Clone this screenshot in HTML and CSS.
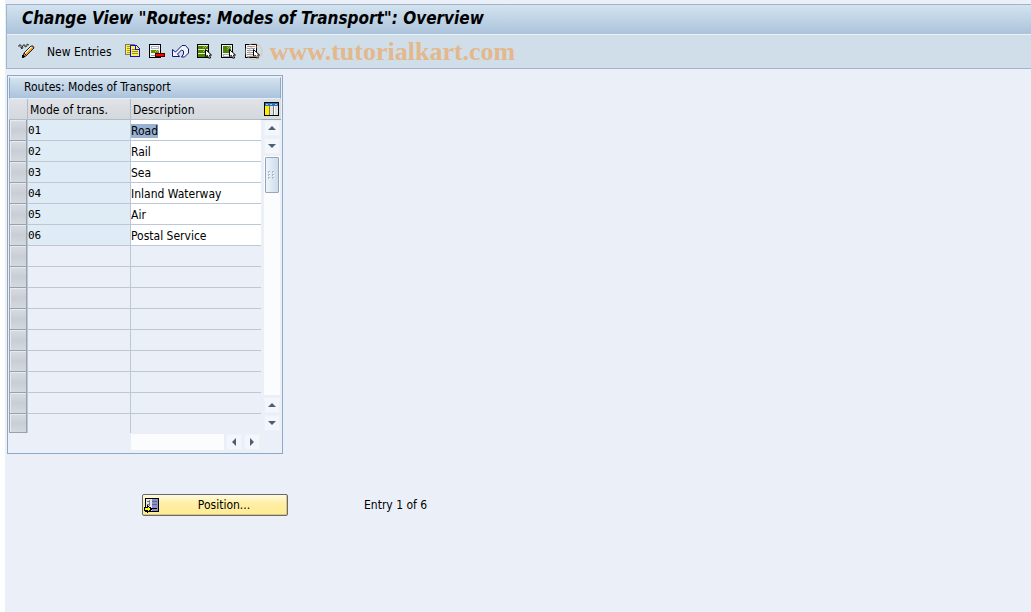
FILE: index.html
```html
<!DOCTYPE html>
<html lang="en">
<head>
<meta charset="utf-8">
<title>Change View "Routes: Modes of Transport": Overview</title>
<link rel="stylesheet" href="styles.css">
</head>
<body>
<header class="top">
  <h1 class="title">Change View "Routes: Modes of Transport": Overview</h1>
  <div class="toolbar">
    <button class="tool" aria-label="Display / Change"><svg width="17" height="16" viewBox="0 0 17 16"><path d="M1 4V2h2v3l2-2V2h2v2l2-1V1l2 1M3 5l1 1 1-2" fill="none" stroke="#333"/><path d="M5 14l1-4 7-7h2l1 2-8 8z" fill="#f39a1d"/><path d="M6 10l7-7 1 1-7 7z" fill="#fff"/><path d="M5 14l1-4 7-7h2l1 2-8 8zM6 10l3 3" fill="none" stroke="#222"/><path d="M4 12h2l1 2-2 1H4z" fill="#000"/></svg></button>
    <button class="tool new">New Entries</button>
    <button class="tool" aria-label="Copy As"><svg width="16" height="16" viewBox="0 0 16 16" shape-rendering="crispEdges"><path d="M.5 1.500h9v10h-9z" fill="#ffee4a" stroke="#777a60"/><path d="M2 3.500h5M2 5.500h5M2 7.500h5M2 9.500h5" stroke="#a69c3a"/><path d="M5.500 2.500h6l3 3v8h-9z" fill="#ffef4a" stroke="#1010d8"/><path d="M10.500 3v3.500h4" fill="none" stroke="#1010d8"/><path d="M7 6.500h3M7 8.500h6M7 10.500h6" stroke="#918b32"/></svg></button>
    <button class="tool" aria-label="Delete"><svg width="17" height="16" viewBox="0 0 17 16" shape-rendering="crispEdges"><path d="M1.500 1.500h11v13h-11z" fill="#f4f6fa" stroke="#000"/><path d="M3 3h8v3H3z" fill="#aab2ca"/><path d="M4 4h6v1H4z" fill="#fff"/><path d="M3 7h8v3H3z" fill="#648d00"/><path d="M8 7h1v1H8zm2 0h1v1h-1zM7 8h1v1H7zm2 0h1v1H9z" fill="#b2c96e"/><path d="M3 12h5v1H3z" fill="#8d9ab8"/><path d="M7.500 10.500h9v3h-9z" fill="#e00" stroke="#400"/><path d="M8 11h8v2H8z" fill="#f00"/></svg></button>
    <button class="tool" aria-label="Undo Change"><svg width="17" height="16" viewBox="0 0 17 16"><path d="M.5 6.500v7h7l-2-2.500 4-4 2 1v3l-2 3h3l4-4V6l-3-3.500H10L3.500 9z" fill="#edf2fb" stroke="#17177c"/></svg></button>
    <button class="tool" aria-label="Select All"><svg width="17" height="16" viewBox="0 0 17 16"><g shape-rendering="crispEdges"><path d="M1.500 1.500h11v13h-11z" fill="#e3eddd" stroke="#000"/><path d="M2 3h10v3H2zm0 4h10v3H2zm0 4h10v3H2z" fill="#4e8200"/><path d="M8 3h1v1H8zm2 0h1v1h-1zM7 4h1v1H7zm2 0h1v1H9zM8 7h1v1H8zm2 0h1v1h-1zM7 8h1v1H7z" fill="#9dbd5c"/></g><path d="M9.500 6.500v7l2-1 1 2.500h2l-1-3h2z" fill="#fff" stroke="#000"/></svg></button>
    <button class="tool" aria-label="Select Block"><svg width="17" height="16" viewBox="0 0 17 16"><g shape-rendering="crispEdges"><path d="M1.500 1.500h11v13h-11z" fill="#edf2f7" stroke="#000"/><path d="M3 3h8v7H3z" fill="#4e8200"/><path d="M8 3h1v1H8zm2 0h1v1h-1zM7 4h1v1H7zm2 0h1v1H9zM8 5h1v1H8zm2 0h1v1h-1zM7 6h1v1H7z" fill="#9dbd5c"/><path d="M3 11h7v3H3z" fill="#9eacc4"/><path d="M4 12h5v1H4z" fill="#fff"/></g><path d="M9.500 6.500v7l2-1 1 2.500h2l-1-3h2z" fill="#fff" stroke="#000"/></svg></button>
    <button class="tool" aria-label="Deselect All"><svg width="17" height="16" viewBox="0 0 17 16"><g shape-rendering="crispEdges"><path d="M1.500 1.500h11v13h-11z" fill="#fff" stroke="#000"/><path d="M3 3.500h8M3 5.500h8M3 7.500h8M3 9.500h6M3 11.500h6M3 13.500h6" stroke="#8796ae"/></g><path d="M9.500 6.500v7l2-1 1 2.500h2l-1-3h2z" fill="#fff" stroke="#000"/></svg></button>
    <div class="watermark"><span class="copy">©</span><span>www.tutorialkart.com</span></div>
  </div>
</header>
<main class="content">
  <section class="panel">
    <h2 class="caption">Routes: Modes of Transport</h2>
    <div class="grid">
      <table class="rows">
        <colgroup><col class="c-sel"><col class="c-mode"><col class="c-desc"></colgroup>
        <thead><tr><th></th><th>Mode of trans.</th><th>Description</th></tr></thead>
        <tbody>
          <tr class="filled"><td><button class="sel" aria-label="Select row 1"></button></td><td>01</td><td><input class="field marked" aria-label="Description 01" value="Road"></td></tr>
          <tr class="filled"><td><button class="sel" aria-label="Select row 2"></button></td><td>02</td><td><input class="field" aria-label="Description 02" value="Rail"></td></tr>
          <tr class="filled"><td><button class="sel" aria-label="Select row 3"></button></td><td>03</td><td><input class="field" aria-label="Description 03" value="Sea"></td></tr>
          <tr class="filled"><td><button class="sel" aria-label="Select row 4"></button></td><td>04</td><td><input class="field" aria-label="Description 04" value="Inland Waterway"></td></tr>
          <tr class="filled"><td><button class="sel" aria-label="Select row 5"></button></td><td>05</td><td><input class="field" aria-label="Description 05" value="Air"></td></tr>
          <tr class="filled"><td><button class="sel" aria-label="Select row 6"></button></td><td>06</td><td><input class="field" aria-label="Description 06" value="Postal Service"></td></tr>
          <tr><td><button class="sel" aria-label="Select row 7"></button></td><td></td><td></td></tr>
          <tr><td><button class="sel" aria-label="Select row 8"></button></td><td></td><td></td></tr>
          <tr><td><button class="sel" aria-label="Select row 9"></button></td><td></td><td></td></tr>
          <tr><td><button class="sel" aria-label="Select row 10"></button></td><td></td><td></td></tr>
          <tr><td><button class="sel" aria-label="Select row 11"></button></td><td></td><td></td></tr>
          <tr><td><button class="sel" aria-label="Select row 12"></button></td><td></td><td></td></tr>
          <tr><td><button class="sel" aria-label="Select row 13"></button></td><td></td><td></td></tr>
          <tr><td><button class="sel" aria-label="Select row 14"></button></td><td></td><td></td></tr>
          <tr class="last"><td><button class="sel" aria-label="Select row 15"></button></td><td></td><td></td></tr>
        </tbody>
      </table>
      <div class="side">
        <button class="config" aria-label="Configuration"><svg width="16" height="16" viewBox="0 0 16 16" shape-rendering="crispEdges"><path d="M.5 1.500h14v13H.5z" fill="#fff" stroke="#000"/><path d="M1 2h13v3H1z" fill="#2d72bd"/><path d="M1 5h4v9H1z" fill="#ffec00"/><path d="M6 5h3v9H6zm5 0h3v9h-3z" fill="#e2e2e2"/><path d="M5.500 5v9M9.500 5v9" stroke="#777"/><path d="M2 3h2v1H2zm4 0h2v1H6zm5 0h2v1h-2z" fill="#9cc8ef"/></svg></button>
        <div class="vbar">
          <button class="arrow" aria-label="Scroll up"><svg width="8" height="4" viewBox="0 0 8 4"><path d="M0 4l4-4 4 4z"/></svg></button>
          <button class="arrow" aria-label="Page down"><svg width="8" height="4" viewBox="0 0 8 4"><path d="M0 0h8L4 4z"/></svg></button>
          <div class="track"><div class="thumb"><svg width="8" height="9" viewBox="0 0 8 9" shape-rendering="crispEdges"><path d="M0 0h2v2H0zm4 0h2v2H4zM0 3h2v2H0zm4 0h2v2H4zM0 6h2v2H0zm4 0h2v2H4z" fill="#a9bacb"/><path d="M1 1h1v1H1zm4 0h1v1H5zM1 4h1v1H1zm4 0h1v1H5zM1 7h1v1H1zm4 0h1v1H5z" fill="#fff"/></svg></div></div>
          <button class="arrow" aria-label="Page up"><svg width="8" height="4" viewBox="0 0 8 4"><path d="M0 4l4-4 4 4z"/></svg></button>
          <button class="arrow" aria-label="Scroll down"><svg width="8" height="4" viewBox="0 0 8 4"><path d="M0 0h8L4 4z"/></svg></button>
        </div>
      </div>
    </div>
    <div class="hbar">
      <div class="htrack"></div>
      <button class="arrow" aria-label="Scroll left"><svg width="4" height="8" viewBox="0 0 4 8"><path d="M4 0v8L0 4z"/></svg></button>
      <button class="arrow" aria-label="Scroll right"><svg width="4" height="8" viewBox="0 0 4 8"><path d="M0 0v8l4-4z"/></svg></button>
    </div>
  </section>
  <div class="footer">
    <button class="position"><svg width="17" height="16" viewBox="0 0 17 16" shape-rendering="crispEdges"><path d="M1.500 1.500h13v13h-13z" fill="#e4e9f2" stroke="#000"/><path d="M8 2h6v12H8z" fill="#8d8fc4"/><path d="M8 4h5v1H8zm0 3h5v1H8z" fill="#61639c"/><path d="M8 11h5v1H8z" fill="#000"/><path d="M3 4h3v1H3zm0 3h3v1H3zM5 3h1v3H5zm0 3h1v3H5z" fill="#777"/><path d="M.5 10.500h3v-2l4 3.500-4 3.500v-2h-3z" fill="#ff0" stroke="#000"/></svg><span>Position...</span></button>
    <span class="entry">Entry 1 of 6</span>
  </div>
</main>
</body>
</html>
```
FILE: styles.css
```css
* { box-sizing: border-box; }

body {
  margin: 0;
  min-height: 100vh;
  padding: 4px 0 0 6px;
  background: linear-gradient(to right, #fdfefe 5px, #ebeff7 5px);
  color: #000;
  font: 12px/16px "DejaVu Sans Condensed", "DejaVu Sans", sans-serif;
}

button {
  margin: 0;
  padding: 0;
  border: 0;
  background: none;
  color: inherit;
  font: inherit;
}

svg { display: block; }

.top {
  border: 1px solid #9fb3cc;
  border-right: 0;
  background: #d0dee9;
}

.title {
  height: 30px;
  margin: 0;
  padding-left: 15px;
  border-bottom: 1px solid #eaf2f8;
  background: linear-gradient(#d3e3ef, #abc3db);
  font-size: 17px;
  font-style: italic;
  font-weight: bold;
  line-height: 27px;
  white-space: nowrap;
}

.toolbar {
  position: relative;
  display: flex;
  align-items: center;
  gap: 7px;
  height: 33px;
  padding: 0 0 2px 11px;
}

.tool { flex: none; white-space: nowrap; }

.new { margin: 0 6px 0 5px; padding-top: 2px; }

.watermark {
  position: absolute;
  top: 3px;
  left: 237px;
  display: flex;
  align-items: center;
  gap: 6px;
  color: #e3b88c;
  font: bold 26px/28px "Liberation Serif", serif;
  pointer-events: none;
}

.copy { font-weight: normal; opacity: 0.6; }

.content { padding: 6px 1px; }

.panel {
  width: 276px;
  padding: 1px;
  border: 1px solid #8ea9c5;
}

.caption {
  height: 22px;
  margin: 0;
  padding-left: 14px;
  border: 1px solid #e4eef6;
  border-left-color: #8ea9c5;
  border-right-color: #8ea9c5;
  background: linear-gradient(#d3e3ef, #abc3db);
  font-size: 12px;
  font-weight: normal;
  line-height: 19px;
}

.grid { display: flex; }

.rows {
  flex: 1;
  border-collapse: separate;
  border-spacing: 0;
  table-layout: fixed;
}

.c-sel { width: 19px; }
.c-mode { width: 103px; }

.rows th {
  height: 21px;
  padding: 1px 2px 0;
  border-right: 1px solid #b2bcc8;
  border-bottom: 1px solid #b2bcc8;
  background: linear-gradient(#e0e3e7, #d3d8dd);
  font-weight: normal;
  text-align: left;
}

.rows th:last-child { border-right: 0; }

.rows td {
  height: 21px;
  padding: 0;
  border-right: 1px solid #bdc8d7;
  border-bottom: 1px solid #bdc8d7;
  line-height: 18px;
}

.rows td:first-child { border-bottom: 0; }
.rows td:last-child { border-right: 0; }
.rows .last td { height: 19px; border-bottom: 0; }

.filled td:nth-child(2) {
  padding-top: 1px;
  background: #dfebf5;
  font-family: "DejaVu Sans Mono", monospace;
  font-size: 11px;
}

.filled td:nth-child(3) { padding-top: 2px; background: #fff; }

.sel {
  display: block;
  width: 18px;
  height: 21px;
  border: 1px solid #98a2af;
  border-top: 0;
  background: linear-gradient(#d8dce1, #c9ced6 50%, #d4d9df);
  box-shadow: inset 1px 1px #e7ebef;
}

.last .sel { height: 19px; }

.field {
  display: block;
  width: 100%;
  height: 16px;
  padding: 0;
  border: 0;
  background: transparent;
  color: inherit;
  font: inherit;
}

.marked {
  width: auto;
  height: 14px;
  field-sizing: content;
  background: #98b2d4;
}

.side {
  display: flex;
  flex-direction: column;
  width: 20px;
}

.config {
  height: 21px;
  padding: 0 1px 1px 3px;
  border-bottom: 1px solid #9aa7b6;
  background: #d8dde2;
}

.vbar {
  display: flex;
  flex: 1;
  flex-direction: column;
  align-items: flex-end;
  gap: 2px;
  padding: 0 1px 2px 0;
}

.arrow {
  display: grid;
  place-items: center;
  width: 16px;
  height: 16px;
  border: 1px solid #eef1f6;
  background: #f3f6fb;
  fill: #4b6075;
}

.track {
  flex: 1;
  width: 16px;
  padding-top: 1px;
  background: #fafcfd;
}

.thumb {
  display: grid;
  place-items: center;
  width: 14px;
  height: 36px;
  margin: auto;
  border: 1px solid #94a7ba;
  border-radius: 1px;
  background: linear-gradient(to right, #eef4fa, #cddceb);
}

.hbar {
  display: flex;
  gap: 2px;
  padding: 1px 21px 2px 122px;
}

.htrack { flex: 1; background: #fafcfd; }

.footer {
  display: flex;
  align-items: center;
  gap: 76px;
  padding: 40px 0 0 135px;
}

.position {
  display: flex;
  align-items: center;
  width: 146px;
  height: 22px;
  padding-left: 1px;
  border: 1px solid #67696d;
  border-radius: 2px;
  background: linear-gradient(#fffbe0, #ffefa6 40%, #ffea93);
  box-shadow: inset -1px -1px #d8c683;
}

.position span { flex: 1; }
```
